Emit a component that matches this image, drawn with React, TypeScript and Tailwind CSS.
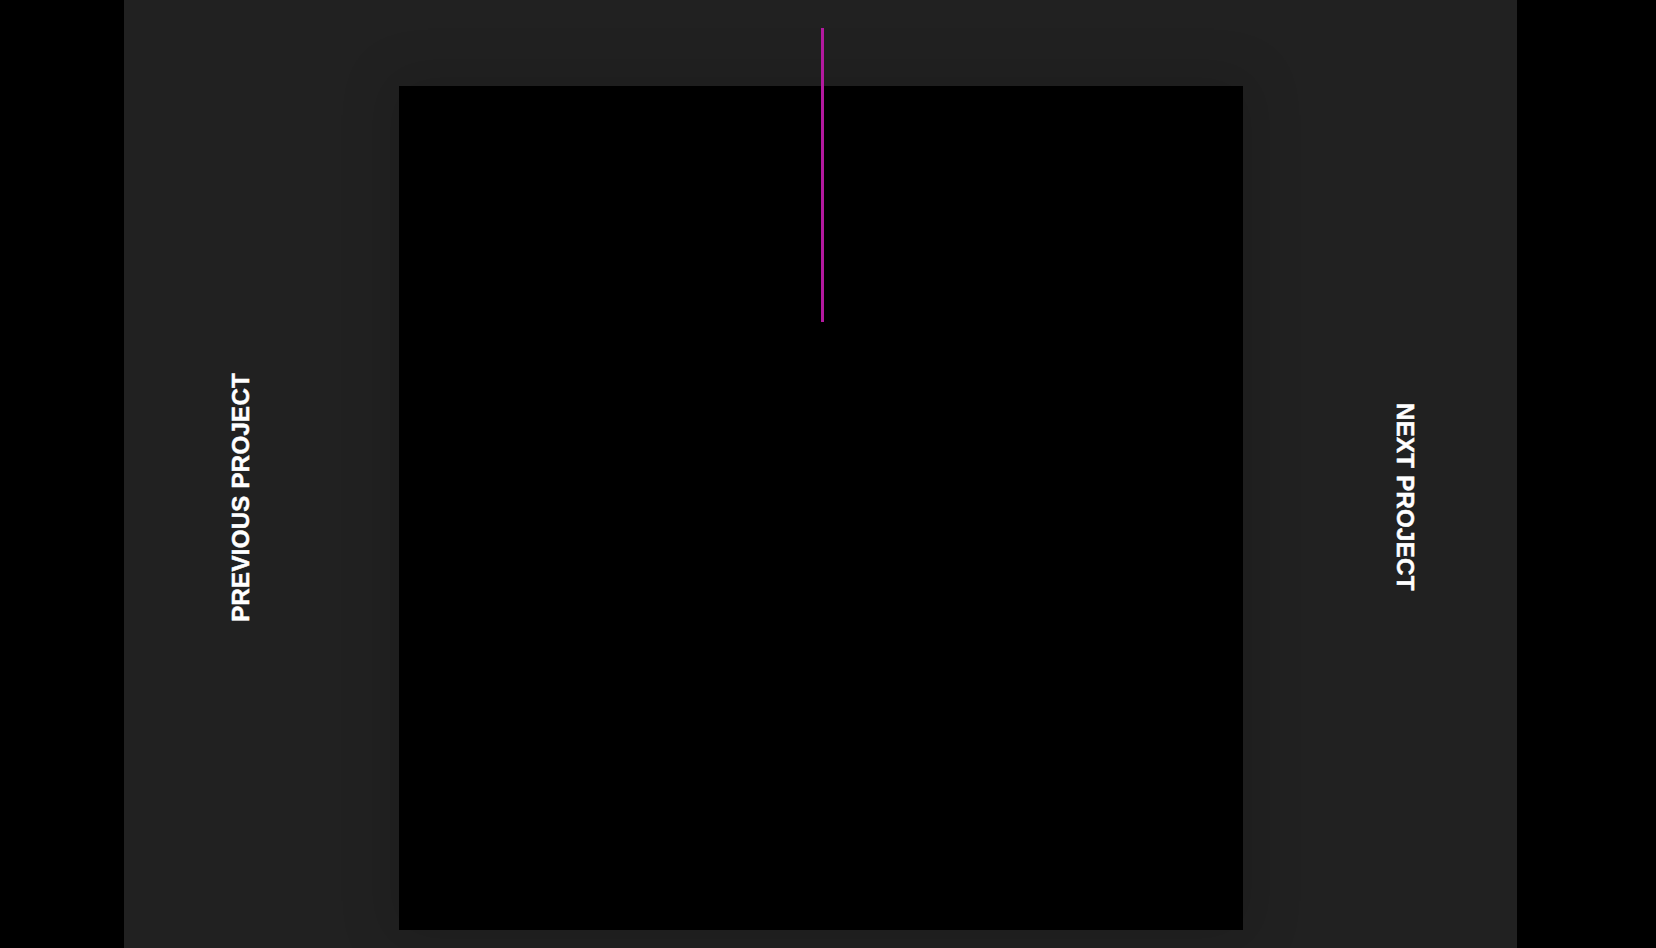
export default function App() {
  const label =
    "font-['Liberation_Sans',Arial,sans-serif] font-bold text-[24px] leading-[24px] tracking-[0.3px] text-white uppercase whitespace-nowrap [writing-mode:vertical-rl] [-webkit-text-stroke:0.5px_white]";
  return (
    <div className="w-[1656px] h-[948px] bg-black overflow-hidden flex">
      <div className="ml-[124px] w-[1393px] h-[948px] bg-[#212121] relative flex">
        <div className="w-[275px] h-full flex flex-col items-start pt-[373px] pl-[105px]">
          <span className={label + " rotate-180"}>Previous Project</span>
        </div>
        <div className="w-[844px] h-full pt-[86px]">
          <div className="w-[844px] h-[844px] bg-black shadow-[0_0_50px_10px_rgba(0,0,0,0.12)]" />
        </div>
        <div className="w-[274px] h-full flex flex-col items-start pt-[403px] pl-[150px]">
          <span className={label}>Next Project</span>
        </div>
        <div className="absolute left-[697px] top-[28px] w-[3px] h-[294px] bg-[#b3199f]" />
      </div>
    </div>
  );
}
